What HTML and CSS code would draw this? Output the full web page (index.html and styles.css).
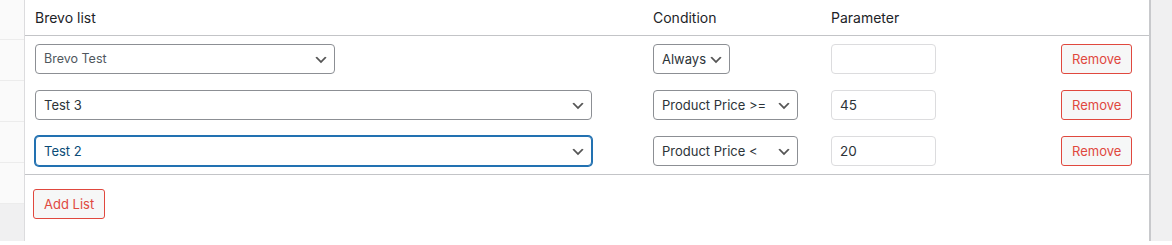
FILE: index.html
```html
<!DOCTYPE html>
<html lang="en">
<head>
<meta charset="utf-8">
<title>Brevo lists</title>
<link rel="stylesheet" href="styles.css">
</head>
<body>
<div class="page">
  <aside class="sidebar">
    <div class="side-item"></div>
    <div class="side-item"></div>
    <div class="side-item"></div>
    <div class="side-item"></div>
    <div class="side-item"></div>
    <div class="side-rest"></div>
  </aside>
  <main class="panel">
    <table class="lists">
      <colgroup>
        <col class="col-list">
        <col class="col-cond">
        <col class="col-param">
        <col class="col-action">
      </colgroup>
      <thead>
        <tr>
          <th>Brevo list</th>
          <th>Condition</th>
          <th>Parameter</th>
          <th></th>
        </tr>
      </thead>
      <tbody>
        <tr>
          <td>
            <span class="select-wrap">
              <select class="sel sel-small">
                <option>Brevo Test</option>
              </select>
              <svg class="chev" viewBox="0 0 20 20" width="16" height="16" aria-hidden="true"><path d="M5 6l5 5 5-5 2 1-7 7-7-7 2-1z"/></svg>
            </span>
          </td>
          <td>
            <span class="select-wrap">
              <select class="sel sel-cond-short">
                <option>Always</option>
              </select>
              <svg class="chev" viewBox="0 0 20 20" width="16" height="16" aria-hidden="true"><path d="M5 6l5 5 5-5 2 1-7 7-7-7 2-1z"/></svg>
            </span>
          </td>
          <td><input class="param" type="text" value=""></td>
          <td><button class="btn-danger" type="button">Remove</button></td>
        </tr>
        <tr>
          <td>
            <span class="select-wrap">
              <select class="sel sel-wide">
                <option>Test 3</option>
              </select>
              <svg class="chev" viewBox="0 0 20 20" width="16" height="16" aria-hidden="true"><path d="M5 6l5 5 5-5 2 1-7 7-7-7 2-1z"/></svg>
            </span>
          </td>
          <td>
            <span class="select-wrap">
              <select class="sel sel-cond-long">
                <option>Product Price &gt;=</option>
              </select>
              <svg class="chev" viewBox="0 0 20 20" width="16" height="16" aria-hidden="true"><path d="M5 6l5 5 5-5 2 1-7 7-7-7 2-1z"/></svg>
            </span>
          </td>
          <td><input class="param" type="text" value="45"></td>
          <td><button class="btn-danger" type="button">Remove</button></td>
        </tr>
        <tr>
          <td>
            <span class="select-wrap">
              <select class="sel sel-wide is-focused">
                <option>Test 2</option>
              </select>
              <svg class="chev" viewBox="0 0 20 20" width="16" height="16" aria-hidden="true"><path d="M5 6l5 5 5-5 2 1-7 7-7-7 2-1z"/></svg>
            </span>
          </td>
          <td>
            <span class="select-wrap">
              <select class="sel sel-cond-long">
                <option>Product Price &lt;</option>
              </select>
              <svg class="chev" viewBox="0 0 20 20" width="16" height="16" aria-hidden="true"><path d="M5 6l5 5 5-5 2 1-7 7-7-7 2-1z"/></svg>
            </span>
          </td>
          <td><input class="param" type="text" value="20"></td>
          <td><button class="btn-danger" type="button">Remove</button></td>
        </tr>
      </tbody>
    </table>
    <div class="actions">
      <button class="btn-danger" type="button">Add List</button>
    </div>
  </main>
  <aside class="rightbar"></aside>
</div>
</body>
</html>
```
FILE: styles.css
```css
* {
  box-sizing: border-box;
}

html, body {
  margin: 0;
  padding: 0;
  background: #ffffff;
}

body {
  font-family: Inter, "Noto Sans", "Liberation Sans", sans-serif;
  font-size: 14px;
  color: #1d2327;
}

.page {
  display: flex;
  height: 241px;
}

.sidebar {
  width: 24px;
  flex: none;
  display: flex;
  flex-direction: column;
  background: #f0f0f1;
  margin-top: -1px;
}

.side-item {
  height: 41px;
  flex: none;
  background: #fafafa;
  border-bottom: 1px solid #ececec;
}

.side-rest {
  flex: 1;
  background: #f0f0f1;
}

.panel {
  flex: 1;
  min-width: 0;
  background: #ffffff;
  border-left: 1px solid #dcdcde;
  border-right: 2px solid #c8c9cc;
}

.rightbar {
  width: 21px;
  flex: none;
  background: #f0f0f1;
}

.lists {
  width: 100%;
  border-collapse: collapse;
  table-layout: fixed;
  border-bottom: 1px solid #c3c4c7;
}

.col-list { width: 618px; }
.col-cond { width: 178px; }
.col-param { width: 230px; }

.lists th {
  text-align: left;
  font-weight: 400;
  font-size: 14px;
  line-height: 19px;
  padding: 8px 10px;
  color: #1d2327;
  border-bottom: 1px solid #c3c4c7;
}

.lists td {
  padding: 8px 10px;
  vertical-align: middle;
  line-height: 0;
}

.select-wrap {
  position: relative;
  display: block;
  width: max-content;
}

.sel {
  -webkit-appearance: none;
  appearance: none;
  display: block;
  height: 30px;
  margin: 0;
  padding: 0 20px 0 8px;
  border: 1px solid #8c8f94;
  border-radius: 4px;
  background: #ffffff;
  font-family: Inter, "Noto Sans", "Liberation Sans", sans-serif;
  font-size: 13px;
  line-height: 28px;
  color: #2c3338;
  outline: none;
}

.sel-small {
  width: 300px;
  font-size: 12.5px;
  color: #50575e;
}

.sel-wide {
  width: 557px;
}

.sel-cond-short {
  width: 77px;
}

.sel-cond-long {
  width: 145px;
}

.sel.is-focused {
  border-color: #2271b1;
  box-shadow: 0 0 0 1px #2271b1;
  color: #0a4b78;
}

.chev {
  position: absolute;
  right: 6px;
  top: 8px;
  fill: #555555;
  pointer-events: none;
}

.param {
  display: block;
  width: 105px;
  height: 30px;
  margin: 0;
  padding: 0 8px;
  border: 1px solid #dcdcde;
  border-radius: 4px;
  background: #ffffff;
  font-family: Inter, "Noto Sans", "Liberation Sans", sans-serif;
  font-size: 13.5px;
  line-height: 28px;
  color: #2c3338;
  outline: none;
}

.btn-danger {
  display: block;
  height: 30px;
  margin: 0;
  padding: 0 10px;
  border: 1px solid #e0483e;
  border-radius: 3px;
  background: #f6f7f7;
  color: #e0483e;
  font-family: Inter, "Noto Sans", "Liberation Sans", sans-serif;
  font-size: 13px;
  line-height: 28px;
  cursor: pointer;
}

.actions {
  padding: 14px 8px 0;
}
```
